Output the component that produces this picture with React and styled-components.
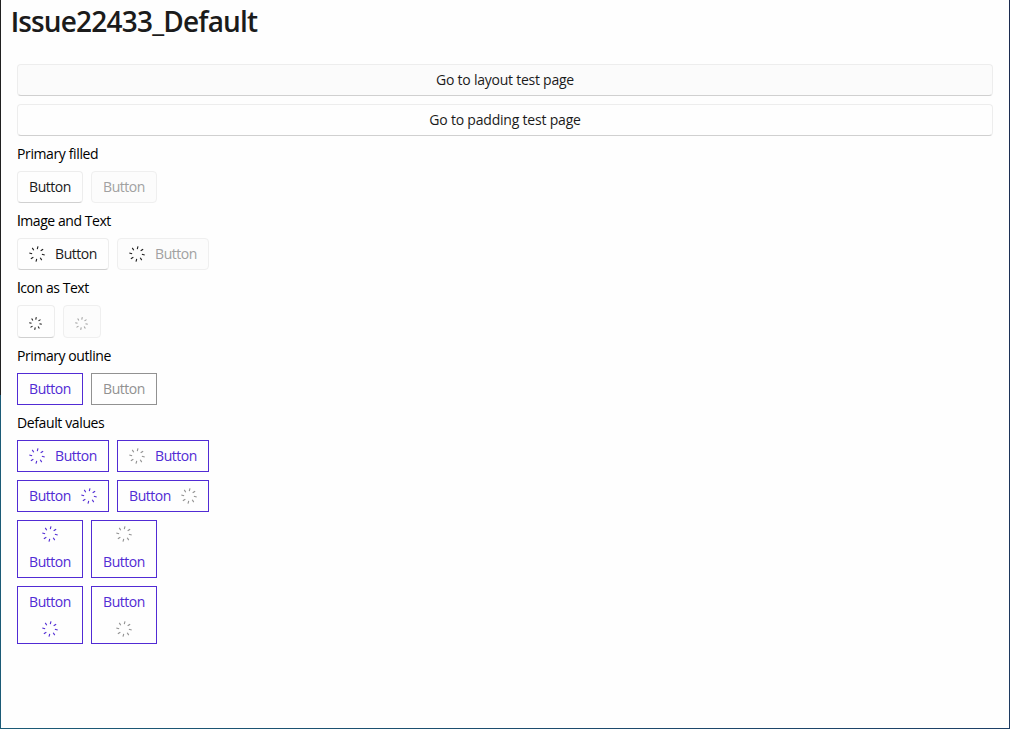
import React from "react";
import styled, { createGlobalStyle } from "styled-components";

const GlobalStyle = createGlobalStyle`
  * { box-sizing: border-box; }
  body { margin: 0; background: #fff; }
`;

const Window = styled.div`
  height: 729px;
  border-style: solid;
  border-width: 0 1px 1px;
  border-color: transparent;
  background:
    linear-gradient(#fefefe, #fefefe) padding-box,
    linear-gradient(#202020 0 395px, #1b5a76 395px) border-box left top / 1px 728px no-repeat,
    linear-gradient(#1b2a4e, #1d3a61) border-box right top / 1px 728px no-repeat,
    linear-gradient(90deg, #1b5a76, #1d3f66) border-box;
  font-family: "Open Sans", "Noto Sans", sans-serif;
  color: #1b1b1b;
`;

const Title = styled.h1`
  margin: 0;
  height: 48px;
  padding: 2px 0 0 10px;
  font-size: 28px;
  line-height: 38px;
  font-weight: 600;
  letter-spacing: -0.8px;

  &::first-letter {
    font-family: Roboto, sans-serif;
    font-weight: 500;
  }
`;

const Content = styled.main`
  display: flex;
  flex-direction: column;
  gap: 8px;
  padding: 16px 16px 0;
`;

const Section = styled.section`
  display: flex;
  flex-direction: column;
  gap: 8px;
`;

const Label = styled.div`
  height: 19px;
  font-size: 14px;
  line-height: 19px;
  letter-spacing: ${(p) => p.$spacing || -0.38}px;
  color: #000;
  white-space: nowrap;

  &::first-letter {
    font-family: ${(p) => (p.$plainInitial ? "Roboto, sans-serif" : "inherit")};
  }
`;

const Row = styled.div`
  display: flex;
  gap: 8px;
`;

const BaseButton = styled.button`
  display: flex;
  flex-direction: ${(p) => p.$direction || "row"};
  align-items: center;
  justify-content: center;
  gap: ${(p) => p.$gap || 10}px;
  width: ${(p) => (p.$width ? `${p.$width}px` : "auto")};
  height: ${(p) => p.$height || 32}px;
  padding: ${(p) => p.$padding || "0"};
  font-family: inherit;
  font-size: 14px;
  line-height: 20px;
  letter-spacing: ${(p) => p.$spacing || -0.45}px;
  white-space: nowrap;
`;

const FilledButton = styled(BaseButton)`
  border: 1px solid #ededed;
  border-bottom-color: #d0d0d0;
  border-radius: 4px;
  background: ${(p) => (p.$hovered ? "#fbfbfb" : "#fefefe")};
  color: #1b1b1b;

  &:disabled {
    border-color: #efefef;
    background: #fcfcfc;
    color: #a1a1a1;
  }
`;

const OutlineButton = styled(BaseButton)`
  border: 1px solid #512bd4;
  background: transparent;
  color: #512bd4;

  &:disabled {
    border-color: #919191;
    color: #919191;
  }
`;

const SpinnerSvg = styled.svg`
  flex: none;
  width: ${(p) => p.$size}px;
  height: ${(p) => p.$size}px;
  color: ${(p) => p.$color || "currentColor"};
`;

function Spinner({ size = 16, color }) {
  return (
    <SpinnerSvg viewBox="-8 -8 16 16" $size={size} $color={color}>
      {[0, 45, 90, 135, 180, 225, 270, 315].map((angle) => (
        <path key={angle} d="M1 -7.7 L0.3 -4.9" transform={`rotate(${angle})`} stroke="currentColor" strokeWidth={size < 16 ? 1.3 : 1.1} />
      ))}
    </SpinnerSvg>
  );
}

const GREY = "#919191";

export default function App() {
  return (
    <>
      <GlobalStyle />
      <Window>
        <Title>Issue22433_Default</Title>
        <Content>
          <FilledButton $hovered $spacing={-0.24}>Go to layout test page</FilledButton>
          <FilledButton $spacing={-0.2}>Go to padding test page</FilledButton>
          <Section>
            <Label>Primary filled</Label>
            <Row>
              <FilledButton $width={66}>Button</FilledButton>
              <FilledButton $width={66} disabled>Button</FilledButton>
            </Row>
          </Section>
          <Section>
            <Label $plainInitial $spacing={-0.45}>Image and Text</Label>
            <Row>
              <FilledButton $width={92}><Spinner />Button</FilledButton>
              <FilledButton $width={92} disabled><Spinner color="#1b1b1b" />Button</FilledButton>
            </Row>
          </Section>
          <Section>
            <Label $plainInitial $spacing={-0.45}>Icon as Text</Label>
            <Row>
              <FilledButton $width={38} $height={33} $padding="4px 1px 0 0"><Spinner size={13} /></FilledButton>
              <FilledButton $width={38} $height={33} $padding="4px 1px 0 0" disabled><Spinner size={13} /></FilledButton>
            </Row>
          </Section>
          <Section>
            <Label $spacing={-0.43}>Primary outline</Label>
            <Row>
              <OutlineButton $width={66}>Button</OutlineButton>
              <OutlineButton $width={66} disabled>Button</OutlineButton>
            </Row>
          </Section>
          <Section>
            <Label>Default values</Label>
            <Row>
              <OutlineButton $width={92}><Spinner />Button</OutlineButton>
              <OutlineButton $width={92}><Spinner color={GREY} />Button</OutlineButton>
            </Row>
            <Row>
              <OutlineButton $width={92}>Button<Spinner /></OutlineButton>
              <OutlineButton $width={92}>Button<Spinner color={GREY} /></OutlineButton>
            </Row>
            <Row>
              <OutlineButton $width={66} $height={58} $direction="column"><Spinner />Button</OutlineButton>
              <OutlineButton $width={66} $height={58} $direction="column"><Spinner color={GREY} />Button</OutlineButton>
            </Row>
            <Row>
              <OutlineButton $width={66} $height={58} $direction="column" $gap={9} $padding="0 0 1px">Button<Spinner /></OutlineButton>
              <OutlineButton $width={66} $height={58} $direction="column" $gap={9} $padding="0 0 1px">Button<Spinner color={GREY} /></OutlineButton>
            </Row>
          </Section>
        </Content>
      </Window>
    </>
  );
}
